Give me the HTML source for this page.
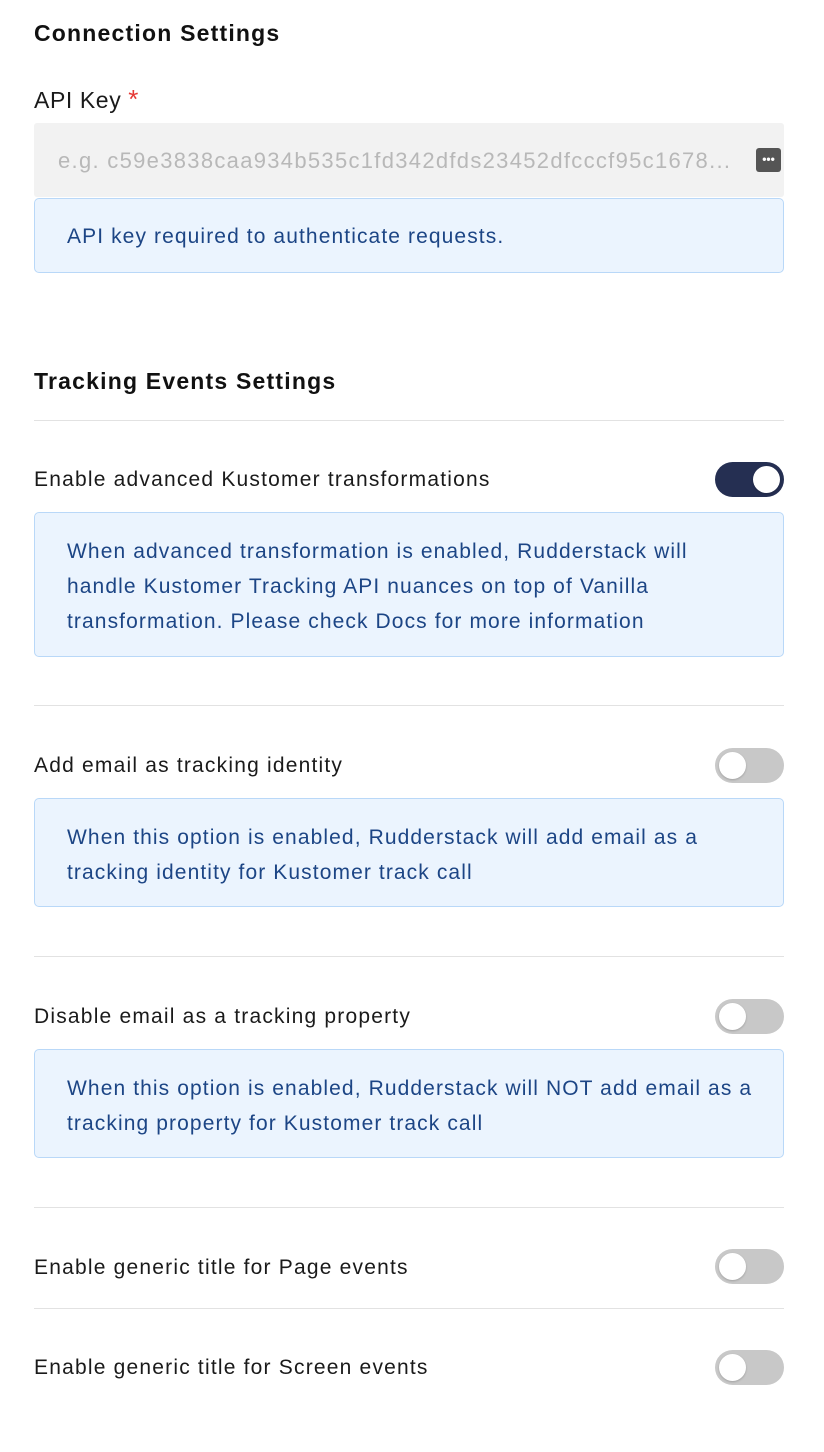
<!DOCTYPE html>
<html><head><meta charset="utf-8"><style>
*{margin:0;padding:0;box-sizing:border-box}
body{width:824px;height:1452px;background:#fff;font-family:"Liberation Sans",sans-serif;color:#1a1a1a;position:relative;overflow:hidden}
.a{position:absolute;white-space:nowrap}
h2{position:absolute;left:34px;font-size:23px;font-weight:bold;line-height:30px;color:#111;letter-spacing:1.2px}
.lbl{position:absolute;left:34px;font-size:21px;line-height:30px;letter-spacing:1.2px}
.box{position:absolute;left:34px;width:750px;background:#ebf4fe;border:1px solid #b9d8f8;border-radius:5px;color:#1c4585;font-size:21px;line-height:35px;padding:0 0 0 32px;letter-spacing:1.1px;white-space:nowrap}
.hr{position:absolute;left:34px;width:750px;height:1px;background:#e2e2e2}
.tg{position:absolute;left:715px;width:69px;height:35px;border-radius:18px;background:#c8c8c8}
.tg::after{content:"";position:absolute;top:4px;left:4px;width:27px;height:27px;border-radius:50%;background:#fff;box-shadow:0 1px 2px rgba(0,0,0,.2)}
.tg.on{background:#252f52}
.tg.on::after{left:38px}
</style></head><body>
<h2 style="top:18px">Connection Settings</h2>
<div class="lbl" style="top:84px;font-size:23px;letter-spacing:0.6px">API Key <span style="color:#e53935;font-size:26px">*</span></div>
<div class="a" style="left:34px;top:123px;width:750px;height:74px;background:#f2f2f2;border-radius:3px"></div>
<div class="a" style="left:58px;top:146px;font-size:22px;line-height:30px;color:#b8b8b8;letter-spacing:1.3px;width:697px;overflow:hidden">e.g. c59e3838caa934b535c1fd342dfds23452dfcccf95c1678...</div>
<div class="a" style="left:756px;top:148px;width:25px;height:24px;background:#555;border-radius:3px;color:#fff;font-size:12px;line-height:22px;text-align:center;font-weight:bold">•••</div>
<div class="box" style="top:198px;height:75px;padding-top:20px">API key required to authenticate requests.</div>

<h2 style="top:366px">Tracking Events Settings</h2>
<div class="hr" style="top:420px"></div>

<div class="lbl" style="top:465px">Enable advanced Kustomer transformations</div>
<div class="tg on" style="top:462px"></div>
<div class="box" style="top:512px;height:145px;padding-top:21px">When advanced transformation is enabled, Rudderstack will<br>handle Kustomer Tracking API nuances on top of Vanilla<br>transformation. Please check Docs for more information</div>
<div class="hr" style="top:705px"></div>

<div class="lbl" style="top:751px">Add email as tracking identity</div>
<div class="tg" style="top:748px"></div>
<div class="box" style="top:798px;height:109px;padding-top:21px">When this option is enabled, Rudderstack will add email as a<br>tracking identity for Kustomer track call</div>
<div class="hr" style="top:956px"></div>

<div class="lbl" style="top:1002px">Disable email as a tracking property</div>
<div class="tg" style="top:999px"></div>
<div class="box" style="top:1049px;height:109px;padding-top:21px">When this option is enabled, Rudderstack will NOT add email as a<br>tracking property for Kustomer track call</div>
<div class="hr" style="top:1207px"></div>

<div class="lbl" style="top:1253px">Enable generic title for Page events</div>
<div class="tg" style="top:1249px"></div>
<div class="hr" style="top:1308px"></div>

<div class="lbl" style="top:1353px">Enable generic title for Screen events</div>
<div class="tg" style="top:1350px"></div>
</body></html>
